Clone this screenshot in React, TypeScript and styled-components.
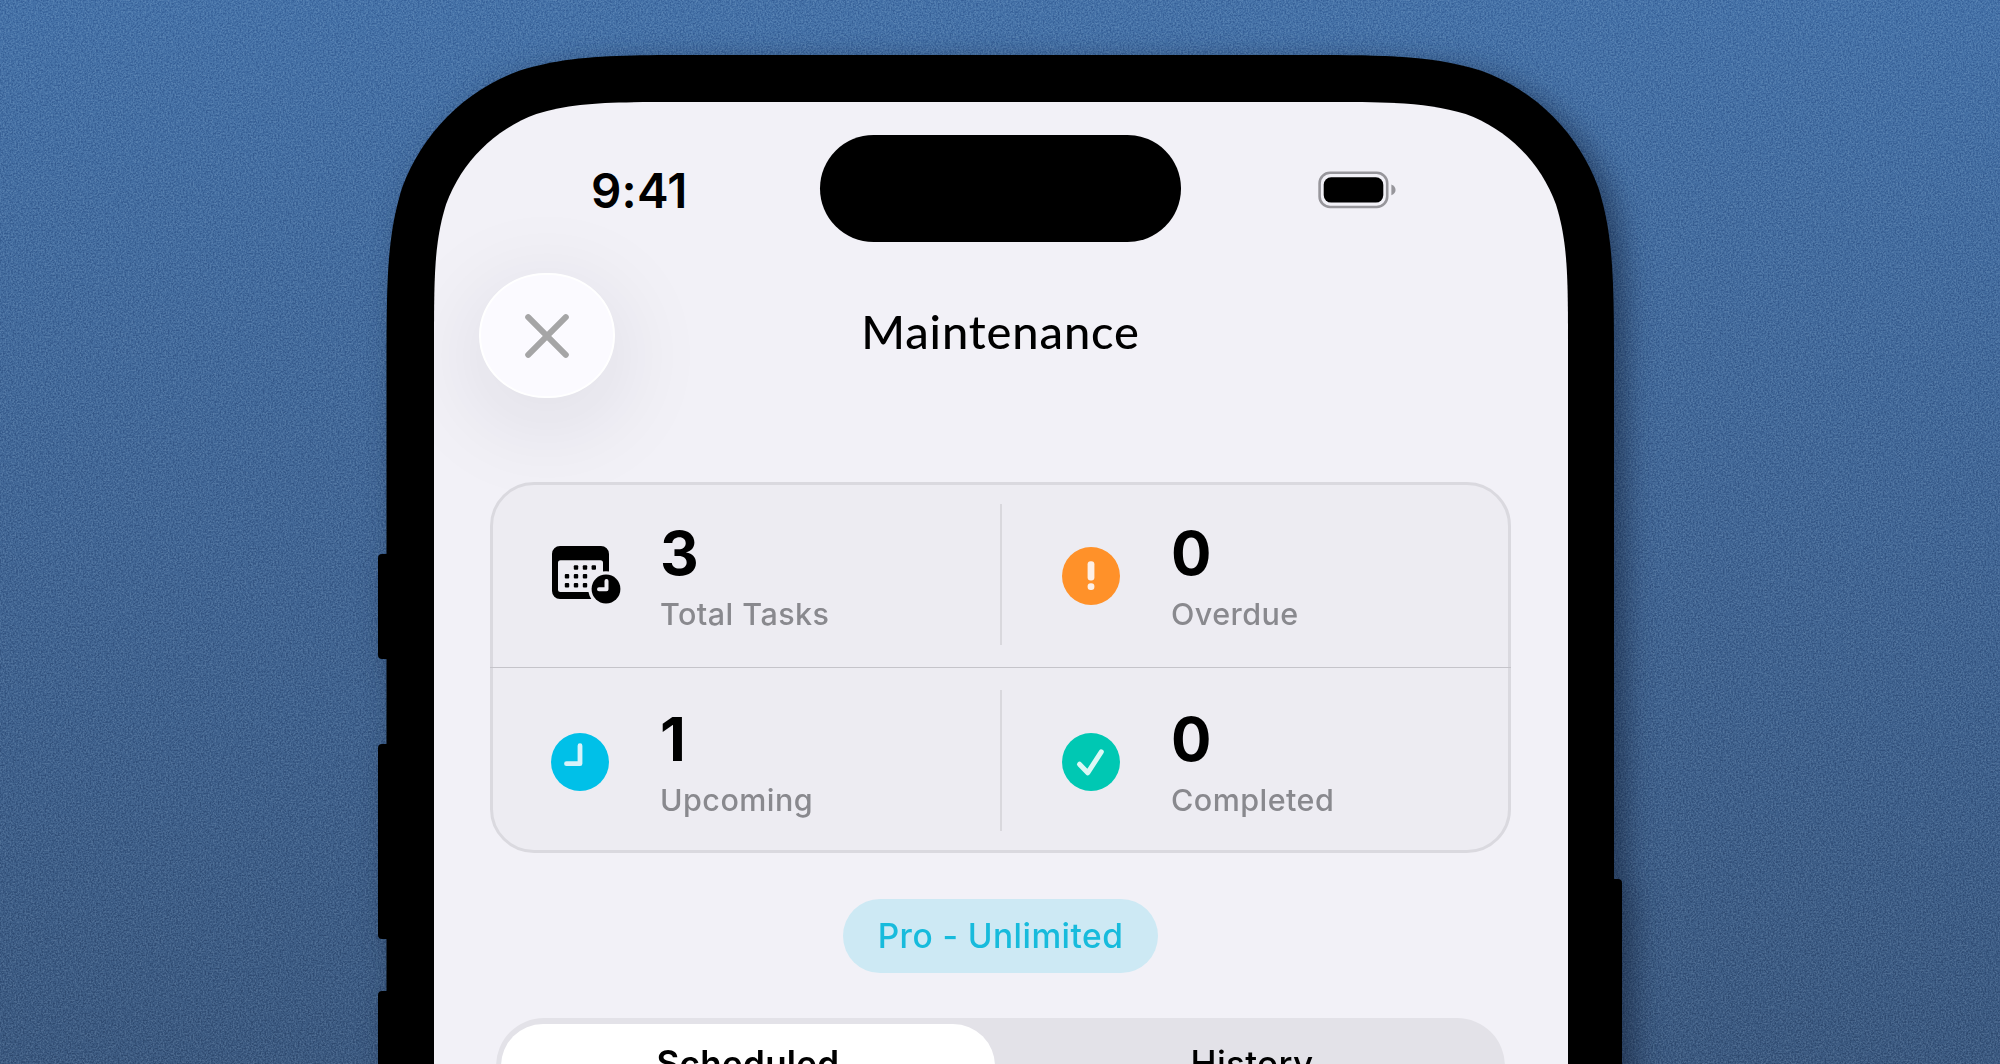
import { FC, ReactNode } from "react";
import styled, { createGlobalStyle } from "styled-components";

interface IStat {
  value: number;
  label: string;
  icon: ReactNode;
}

const CalendarIcon: FC = () => (
  <svg width="70" height="60" viewBox="-1 0 70 60">
    <mask id="badge-cut">
      <rect width="69" height="58" fill="#fff" />
      <circle cx="54" cy="43" r="17.8" fill="#000" />
    </mask>
    <g mask="url(#badge-cut)">
      <path
        fillRule="evenodd"
        d="M8 0H49a8 8 0 0 1 8 8V45a8 8 0 0 1-8 8H8a8 8 0 0 1-8-8V8a8 8 0 0 1 8-8ZM8.500 14.200a2.500 2.500 0 0 0-2.500 2.500V43.500a2.500 2.500 0 0 0 2.500 2.500H48.500a2.500 2.500 0 0 0 2.500-2.500V16.700a2.500 2.500 0 0 0-2.500-2.500Z"
      />
      {[[24, 21.500], [33, 21.500], [41.800, 21.500], [15, 30.300], [24, 30.300], [33, 30.300], [15, 39.200], [24, 39.200], [33, 39.200]].map(([x, y]) => (
        <rect key={`${x}-${y}`} x={x - 2.200} y={y - 2.200} width="4.400" height="4.400" rx="1" />
      ))}
    </g>
    <circle cx="54" cy="43" r="14.400" />
    <path d="M54.500 35V43.300H47" fill="none" stroke="#edecf2" strokeWidth="4" strokeLinecap="round" strokeLinejoin="round" />
  </svg>
);

const AlertIcon: FC = () => (
  <svg width="58" height="58" viewBox="0 0 58 58">
    <circle cx="29" cy="29" r="29" fill="#ff9129" />
    <rect x="25.600" y="14.300" width="6.800" height="19.200" rx="3" fill="#fdefe6" />
    <rect x="25.600" y="36.300" width="6.800" height="6.800" rx="3" fill="#fdefe6" />
  </svg>
);

const ClockIcon: FC = () => (
  <svg width="58" height="58" viewBox="0 0 58 58">
    <circle cx="29" cy="29" r="29" fill="#00c0e8" />
    <path d="M29 12.700V30.700H15.500" fill="none" stroke="#d9f2fa" strokeWidth="4.800" strokeLinecap="round" strokeLinejoin="round" />
  </svg>
);

const CheckIcon: FC = () => (
  <svg width="58" height="58" viewBox="0 0 58 58">
    <circle cx="29" cy="29" r="29" fill="#00c8b3" />
    <path d="M17.500 31.200L25.700 39.800L39.300 18.800" fill="none" stroke="#dcf8f5" strokeWidth="5" strokeLinecap="round" strokeLinejoin="round" />
  </svg>
);

const BatteryIcon: FC = () => (
  <svg width="78" height="38" viewBox="0 0 78 38">
    <rect x="1.600" y="1.800" width="67.600" height="34.200" rx="10.500" fill="none" stroke="#97969b" strokeWidth="2.600" />
    <rect x="5.700" y="6.200" width="59.600" height="25.400" rx="7.500" />
    <path d="M73.400 13.600C76.200 14.800 77.500 16.600 77.500 18.900C77.500 21.200 76.200 23 73.400 24.200Z" fill="#97969b" />
  </svg>
);

const CloseIcon: FC = () => (
  <svg width="44" height="44" viewBox="0 0 44 44">
    <path d="M3.200 3.200L40.800 40.800M40.800 3.200L3.200 40.800" stroke="#a5a5a6" strokeWidth="6" strokeLinecap="round" />
  </svg>
);

const rows: IStat[][] = [
  [
    { value: 3, label: "Total Tasks", icon: <CalendarIcon /> },
    { value: 0, label: "Overdue", icon: <AlertIcon /> },
  ],
  [
    { value: 1, label: "Upcoming", icon: <ClockIcon /> },
    { value: 0, label: "Completed", icon: <CheckIcon /> },
  ],
];

const App: FC = () => {
  const renderRow = (row: IStat[]): ReactNode[] => {
    return row.map((stat) => (
      <Stat key={stat.label}>
        <StatIcon>{stat.icon}</StatIcon>
        <div>
          <StatValue>{stat.value}</StatValue>
          <StatLabel>{stat.label}</StatLabel>
        </div>
      </Stat>
    ));
  };

  return (
    <Stage>
      <GlobalStyle />
      <Grain>
        <filter id="grain" colorInterpolationFilters="sRGB">
          <feTurbulence type="fractalNoise" baseFrequency="0.6" numOctaves="2" seed="4" />
          <feColorMatrix values="2 0 0 0 -0.5  2 0 0 0 -0.5  2 0 0 0 -0.5  0 0 0 0 1" />
        </filter>
        <rect width="100%" height="100%" filter="url(#grain)" />
      </Grain>
      <Device>
        <SideButton $side="left" $top={499} $height={105} />
        <SideButton $side="left" $top={689} $height={195} />
        <SideButton $side="left" $top={936} $height={195} />
        <SideButton $side="right" $top={824} $height={300} />
        <Body>
          <Screen>
            <StatusBar>
              <Time>9:41</Time>
              <Island />
              <BatterySlot><BatteryIcon /></BatterySlot>
            </StatusBar>
            <NavBar>
              <CloseButton aria-label="Close"><CloseIcon /></CloseButton>
              <Title>Maintenance</Title>
            </NavBar>
            <Card>
              <StatRow $offset={1}>{renderRow(rows[0])}</StatRow>
              <Divider />
              <StatRow $offset={4}>{renderRow(rows[1])}</StatRow>
            </Card>
            <Plan>Pro - Unlimited</Plan>
            <Segments>
              <Segment $active>Scheduled</Segment>
              <Segment>History</Segment>
            </Segments>
          </Screen>
        </Body>
      </Device>
    </Stage>
  );
};

const GlobalStyle = createGlobalStyle`
  * {
    box-sizing: border-box;
  }
  body {
    margin: 0;
    overflow: hidden;
  }
`;

const Stage = styled.div`
  position: relative;
  display: flex;
  justify-content: center;
  width: 2000px;
  height: 1064px;
  padding-top: 55px;
  overflow: hidden;
  color: #000;
  font-family: Inter, "Liberation Sans", sans-serif;
  background: linear-gradient(180deg, #4572a8 0%, #416695 50%, #3b5980 100%);
`;

const Grain = styled.svg`
  position: absolute;
  inset: 0;
  width: 100%;
  height: 100%;
  opacity: 0.3;
  mix-blend-mode: soft-light;
`;

const Device = styled.div`
  position: relative;
  flex: none;
  width: 1228px;
  height: 1200px;
  filter: drop-shadow(12px 8px 14px rgba(10, 20, 40, 0.5));
`;

const SideButton = styled.span<{ $side: "left" | "right"; $top: number; $height: number }>`
  position: absolute;
  ${({ $side }) => $side}: -8px;
  top: ${({ $top }) => $top}px;
  width: 20px;
  height: ${({ $height }) => $height}px;
  border-radius: 4px;
  background: #000;
`;

/* continuous corners: a round middle with long flat tails */
const Body = styled.div`
  height: 100%;
  padding: 47px 46px 0 48px;
  background: #000;
  clip-path: path("M0.500 1200V321C0.500 228.600 0.500 182.400 16.200 132.600C36 78.300 78.800 35.500 133.100 15.700C182.900 0 229.100 0 321.500 0H907C999.400 0 1045.600 0 1095.400 15.700C1149.700 35.500 1192.500 78.300 1212.300 132.600C1228 182.400 1228 228.600 1228 321V1200Z");
`;

const Screen = styled.main`
  display: flex;
  flex-direction: column;
  height: 100%;
  background: #f2f1f7;
  clip-path: path("M0 1200V247.600C0 176.300 0 140.700 12.100 102.300C27.400 60.400 60.400 27.400 102.300 12.100C140.700 0 176.300 0 247.600 0H886.400C957.700 0 993.300 0 1031.700 12.100C1073.600 27.400 1106.600 60.400 1121.900 102.300C1134 140.700 1134 176.300 1134 247.600V1200Z");
`;

const StatusBar = styled.div`
  display: grid;
  grid-template-columns: 386px 361px 1fr;
  height: 140px;
  padding-top: 33px;
`;

const Time = styled.div`
  padding: 28px 0 0 157px;
  font-size: 47.5px;
  font-weight: 600;
  line-height: 55px;
  letter-spacing: 0.2px;
`;

const Island = styled.div`
  height: 107px;
  border-radius: 54px;
  background: #000;
`;

const BatterySlot = styled.div`
  padding: 36px 0 0 137px;
`;

const NavBar = styled.header`
  display: grid;
  grid-template-columns: 136px 1fr 136px;
  align-items: center;
  height: 125px;
  margin: 31px 46px 0 45px;
`;

const CloseButton = styled.button`
  display: flex;
  align-items: center;
  justify-content: center;
  width: 136px;
  height: 125px;
  padding: 0;
  border: 2px solid #fff;
  border-radius: 66px / 62px;
  background: #fbfaff;
  box-shadow: 0 20px 90px 12px rgba(30, 30, 50, 0.08);
`;

const Title = styled.h1`
  margin: 0;
  padding-bottom: 9px;
  text-align: center;
  font-family: Lato, sans-serif;
  font-size: 47px;
  font-weight: 500;
  line-height: 60px;
  letter-spacing: 0.9px;
`;

const Card = styled.section`
  margin: 84px 57px 0 56px;
  border: 3px solid #dad9df;
  border-radius: 44px;
  background: #edecf2;
`;

const StatRow = styled.div<{ $offset: number }>`
  display: grid;
  grid-template-columns: 509px 1fr;
  grid-auto-rows: 182px;
  height: 182px;
  padding-top: ${({ $offset }) => $offset}px;
`;

const Stat = styled.div`
  display: grid;
  grid-template-columns: 109px 1fr;
  align-items: center;
  padding-left: 60px;

  &:first-child {
    padding-left: 58px;
    background: linear-gradient(#d9d8dd, #d9d8dd) right 0 top 18px / 2px 141px no-repeat;
  }
`;

const StatIcon = styled.div`
  display: flex;
  padding-bottom: 3px;
`;

const StatValue = styled.div`
  font-size: 60px;
  font-weight: 700;
  line-height: 70px;
`;

const StatLabel = styled.div`
  margin-top: 4px;
  color: #89898e;
  font-size: 30.5px;
  font-weight: 450;
  line-height: 44px;
  letter-spacing: 0.45px;
`;

const Divider = styled.hr`
  height: 1px;
  margin: 0 -3px;
  border: 0;
  background: #c5c4ca;
`;

const Plan = styled.div`
  align-self: center;
  width: 315px;
  height: 74px;
  margin: 46px 1px 0 0;
  border-radius: 37px;
  background: #cde9f4;
  color: #17bbdc;
  text-align: center;
  font-size: 33.5px;
  font-weight: 500;
  line-height: 75px;
  letter-spacing: 0.45px;
`;

const Segments = styled.div`
  display: grid;
  grid-template-columns: 494px 1fr;
  height: 96px;
  margin: 45px 63px 0 62px;
  padding: 6px 0 6px 5px;
  border-radius: 48px;
  background: #e3e2e8;
`;

const Segment = styled.div<{ $active?: boolean }>`
  padding-left: ${({ $active }) => ($active ? 0 : 4)}px;
  border-radius: 42px;
  background: ${({ $active }) => ($active ? "#fff" : "transparent")};
  text-align: center;
  font-size: 35px;
  font-weight: ${({ $active }) => ($active ? 600 : 500)};
  line-height: 78px;
  letter-spacing: 0.3px;
`;

export default App;
